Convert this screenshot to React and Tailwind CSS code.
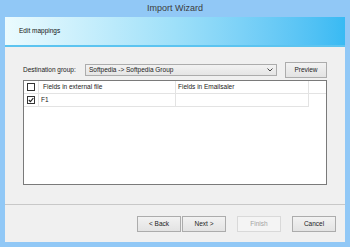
import React from 'react';

const font = { fontFamily: '"Liberation Sans", Arial, sans-serif' };

const Btn = ({ children, disabled, className = '' }) => (
  <div
    className={`h-[16px] flex items-center justify-center border text-[6.5px] ${
      disabled
        ? 'border-[#d9d9d9] bg-[#f4f4f4] text-[#a3a3a3]'
        : 'border-[#acacac] bg-gradient-to-b from-[#f2f2f2] to-[#e3e3e3] text-[#222]'
    } ${className}`}
  >
    {children}
  </div>
);

const Check = ({ checked }) => (
  <div className="w-[8px] h-[8px] border border-[#333] bg-white flex items-center justify-center">
    {checked && (
      <svg width="6" height="6" viewBox="0 0 6 6">
        <path d="M0.8 3 L2.4 4.6 L5.3 1.2" fill="none" stroke="#222" strokeWidth="1.1" />
      </svg>
    )}
  </div>
);

const App = () => {
  return (
    <div style={font} className="w-[350px] h-[247px] bg-[#91c8f6] flex flex-col px-[5px] pb-[5px]">
      <div className="h-[17px] flex items-center justify-center text-[9px] text-[#3c3c3c]">Import Wizard</div>

      <div className="flex-1 flex flex-col bg-[#f0f0f0]">
        <div className="h-[30px] flex items-center pl-[14px] text-[6.5px] text-[#111] bg-gradient-to-r from-[#ebfbfe] via-[#9ee0f9] to-[#38baf3] border-b-2 border-[#5cc4f0]">
          Edit mappings
        </div>

        <div className="flex flex-col px-[18px] pt-[17px]">
          <div className="flex items-center h-[12px]">
            <div className="w-[62px] text-[6.5px] text-[#222]">Destination group:</div>
            <div className="w-[192px] h-[12px] flex items-center justify-between border border-[#acacac] bg-gradient-to-b from-[#f2f2f2] to-[#e5e5e5] pl-[3px] pr-[3px] text-[6.5px] text-[#222]">
              <span>Softpedia -&gt; Softpedia Group</span>
              <svg width="6" height="4" viewBox="0 0 6 4">
                <path d="M0.5 0.5 L3 3 L5.5 0.5" fill="none" stroke="#444" strokeWidth="1" />
              </svg>
            </div>
            <Btn className="ml-[8px] w-[42px] h-[13px]">Preview</Btn>
          </div>

          <div className="mt-[4px] h-[105px] border border-[#7a7a7a] bg-white">
            <div className="grid grid-cols-[15px_137px_133px] h-[13px] border-b border-[#e3e3e3]">
              <div className="flex items-center justify-center border-r border-[#e3e3e3]">
                <Check />
              </div>
              <div className="flex items-center pl-[4px] text-[6.5px] text-[#222] border-r border-[#e3e3e3]">Fields in external file</div>
              <div className="flex items-center pl-[2px] text-[6.5px] text-[#222] border-r border-[#e3e3e3]">Fields in Emailsaler</div>
            </div>
            <div className="grid grid-cols-[15px_137px_133px] h-[13px]">
              <div className="flex items-center justify-center border-r border-b border-[#e3e3e3]">
                <Check checked />
              </div>
              <div className="flex items-center pl-[2px] text-[6.5px] text-[#222] border-r border-b border-[#e3e3e3]">F1</div>
              <div className="border-r border-b border-[#e3e3e3]" />
            </div>
          </div>
        </div>

        <div className="mt-[19px] border-t border-[#c8c8c8]" />
        <div className="flex justify-end pr-[9px] mt-[11px]">
          <Btn className="w-[44px]">&lt; Back</Btn>
          <Btn className="w-[44px] ml-[1px]">Next &gt;</Btn>
          <Btn disabled className="w-[44px] ml-[11px]">Finish</Btn>
          <Btn className="w-[44px] ml-[11px]">Cancel</Btn>
        </div>
      </div>
    </div>
  );
};

export default App;
